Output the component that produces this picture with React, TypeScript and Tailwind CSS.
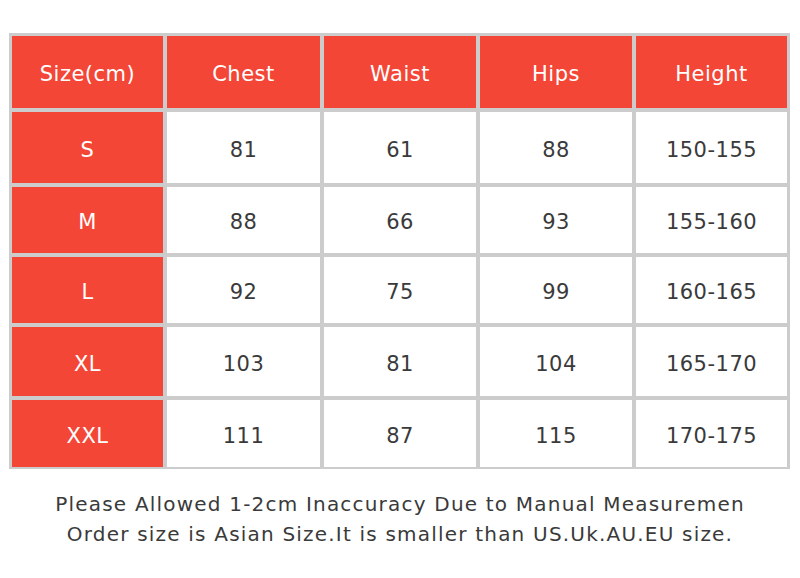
import React from 'react';

const headers = ['Size(cm)', 'Chest', 'Waist', 'Hips', 'Height'];

const rows = [
  { size: 'S', chest: '81', waist: '61', hips: '88', height: '150-155', h: 'h-[71px]' },
  { size: 'M', chest: '88', waist: '66', hips: '93', height: '155-160', h: 'h-[66px]' },
  { size: 'L', chest: '92', waist: '75', hips: '99', height: '160-165', h: 'h-[66px]' },
  { size: 'XL', chest: '103', waist: '81', hips: '104', height: '165-170', h: 'h-[69px]' },
  { size: 'XXL', chest: '111', waist: '87', hips: '115', height: '170-175', h: 'h-[67px]' },
];

export default function App() {
  return (
    <div className="w-[800px] h-[578px] bg-white font-['DejaVu_Sans',sans-serif] pt-[33px]">
      <div className="ml-[9px] w-[781px] bg-[#cccccc] pt-[3px] pl-[3px] pr-[3px] pb-[2px] grid grid-cols-[151px_153px_152px_152px_151px] gap-[4px]">
        {headers.map((h) => (
          <div key={h} className="h-[72px] pt-[6px] bg-[#f44637] text-white text-[21px] tracking-[0.5px] flex items-center justify-center">
            {h}
          </div>
        ))}
        {rows.map((r) => (
          <React.Fragment key={r.size}>
            <div className={`${r.h} pt-[6px] bg-[#f44637] text-white text-[21px] tracking-[0.5px] flex items-center justify-center`}>
              {r.size}
            </div>
            {[r.chest, r.waist, r.hips, r.height].map((v, i) => (
              <div key={i} className={`${r.h} pt-[6px] bg-white text-[#3a3a3a] text-[21px] tracking-[0.5px] flex items-center justify-center`}>
                {v}
              </div>
            ))}
          </React.Fragment>
        ))}
      </div>
      <div className="mt-[20px] flex flex-col items-center text-[#3a3a3a] text-[20px] tracking-[1.2px] leading-[30px]">
        <p>Please Allowed 1-2cm Inaccuracy Due to Manual Measuremen</p>
        <p>Order size is Asian Size.It is smaller than US.Uk.AU.EU size.</p>
      </div>
    </div>
  );
}
